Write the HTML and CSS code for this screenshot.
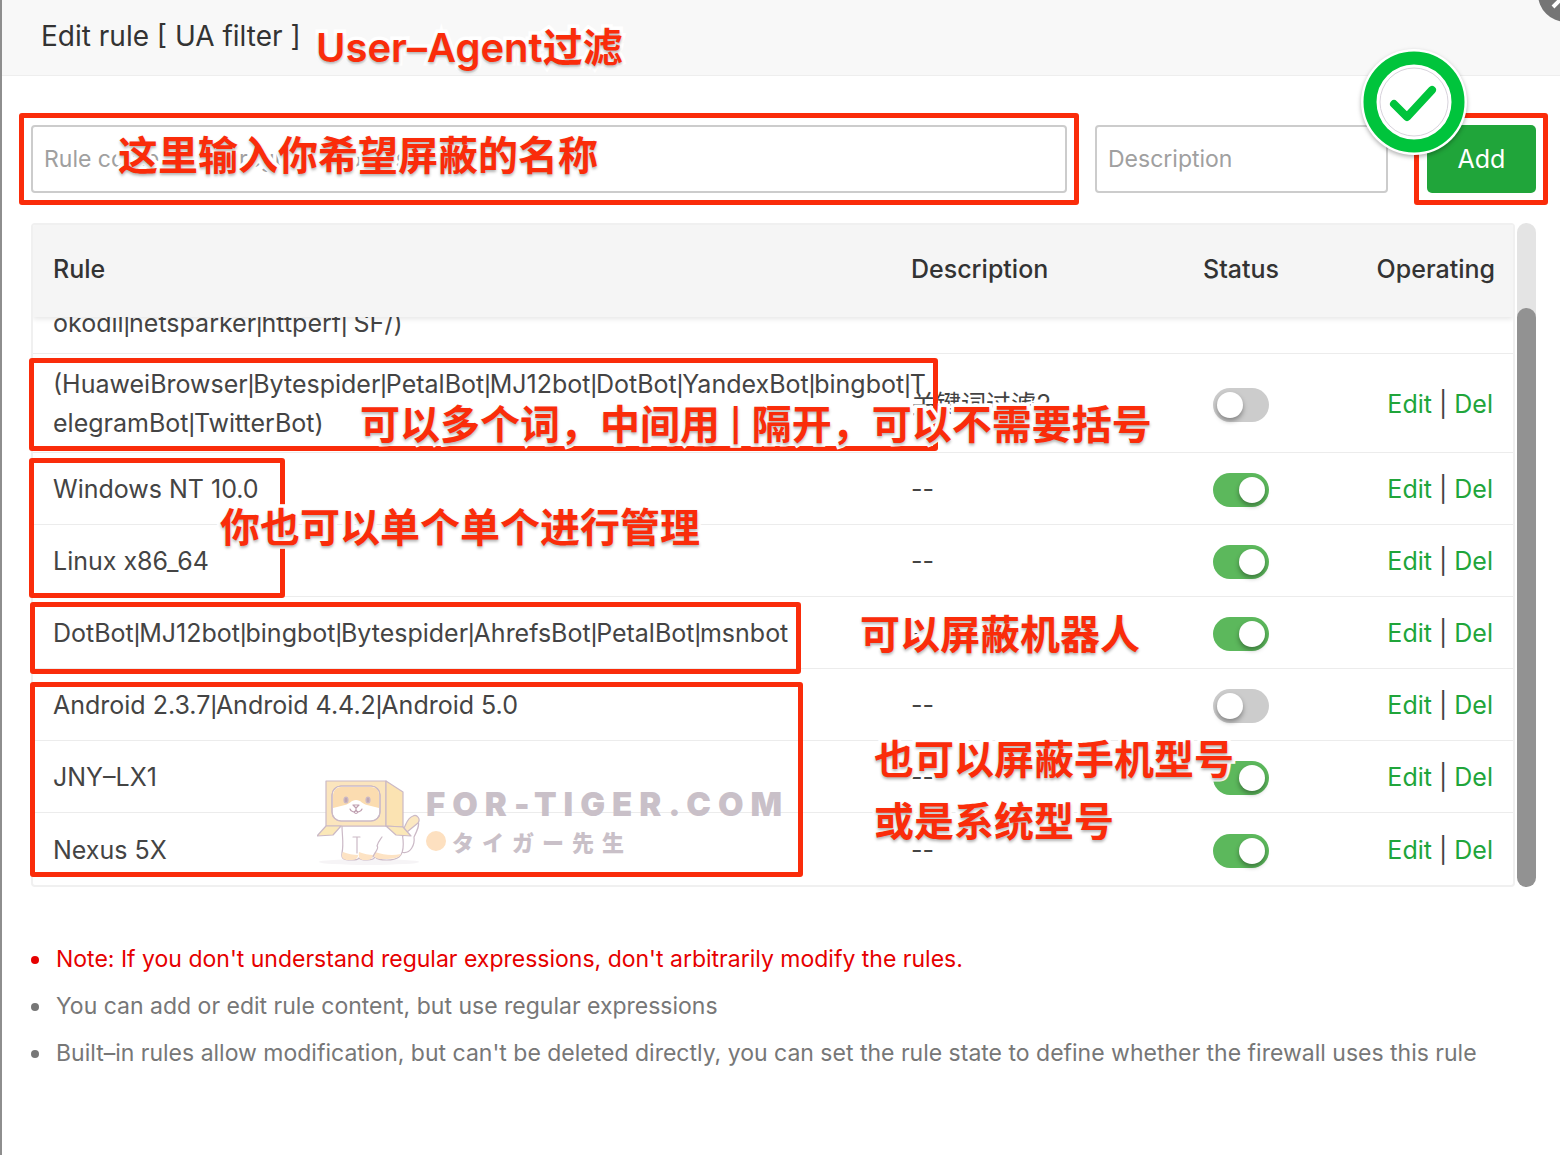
FILE: index.html
```
<!DOCTYPE html>
<html lang="en">
<head>
    <meta charset="UTF-8">
    <meta name="viewport" content="width=device-width, initial-scale=1.0">
    <title>Edit rule [ UA filter ]</title>
    <link rel="stylesheet" href="styles.css">
</head>
<body>
    <div class="dialog">
        <header class="dialog-title">
            <h1>Edit rule [ UA filter ]</h1>
            <button class="close-btn" aria-label="Close">
                <svg viewBox="0 0 56 56" width="56" height="56"><circle cx="28" cy="28" r="28" fill="#757575"/><path d="M15 15l26 26M41 15L15 41" stroke="#fff" stroke-width="4"/></svg>
            </button>
        </header>

        <main class="dialog-body">
            <form class="rule-form">
                <input class="field rule-input" type="text" aria-label="Rule content" placeholder="Rule content, use regular expressions">
                <input class="field desc-input" type="text" aria-label="Description" placeholder="Description">
                <button class="add-btn" type="button">Add</button>
            </form>

            <div class="table-area">
                <div class="table-scroll">
                    <table class="rule-table">
                        <thead>
                            <tr><th>Rule</th><th class="col-desc">Description</th><th class="col-status">Status</th><th class="col-op">Operating</th></tr>
                        </thead>
                        <tbody>
                            <tr class="row-long"><td>okodil<span class="or">|</span>netsparker<span class="or">|</span>httperf<span class="or">|</span> SF/)</td><td></td><td></td><td></td></tr>
                            <tr>
                                <td><div class="rule-text">(HuaweiBrowser<span class="or">|</span>Bytespider<span class="or">|</span>PetalBot<span class="or">|</span>MJ12bot<span class="or">|</span>DotBot<span class="or">|</span>YandexBot<span class="or">|</span>bingbot<span class="or">|</span>TelegramBot<span class="or">|</span>TwitterBot)</div></td>
                                <td>关键词过滤2</td>
                                <td class="status"><input class="switch" type="checkbox" aria-label="Huawei rule status"></td>
                                <td class="op"><a href="#">Edit</a> | <a href="#">Del</a></td>
                            </tr>
                            <tr>
                                <td>Windows NT 10.0</td>
                                <td>--</td>
                                <td class="status"><input class="switch" type="checkbox" aria-label="Windows NT 10.0 status" checked></td>
                                <td class="op"><a href="#">Edit</a> | <a href="#">Del</a></td>
                            </tr>
                            <tr>
                                <td>Linux x86_64</td>
                                <td>--</td>
                                <td class="status"><input class="switch" type="checkbox" aria-label="Linux x86_64 status" checked></td>
                                <td class="op"><a href="#">Edit</a> | <a href="#">Del</a></td>
                            </tr>
                            <tr>
                                <td>DotBot<span class="or">|</span>MJ12bot<span class="or">|</span>bingbot<span class="or">|</span>Bytespider<span class="or">|</span>AhrefsBot<span class="or">|</span>PetalBot<span class="or">|</span>msnbot</td>
                                <td>--</td>
                                <td class="status"><input class="switch" type="checkbox" aria-label="Bots status" checked></td>
                                <td class="op"><a href="#">Edit</a> | <a href="#">Del</a></td>
                            </tr>
                            <tr>
                                <td>Android 2.3.7<span class="or">|</span>Android 4.4.2<span class="or">|</span>Android 5.0</td>
                                <td>--</td>
                                <td class="status"><input class="switch" type="checkbox" aria-label="Android status"></td>
                                <td class="op"><a href="#">Edit</a> | <a href="#">Del</a></td>
                            </tr>
                            <tr>
                                <td>JNY–LX1</td>
                                <td>--</td>
                                <td class="status"><input class="switch" type="checkbox" aria-label="JNY-LX1 status" checked></td>
                                <td class="op"><a href="#">Edit</a> | <a href="#">Del</a></td>
                            </tr>
                            <tr>
                                <td>Nexus 5X</td>
                                <td>--</td>
                                <td class="status"><input class="switch" type="checkbox" aria-label="Nexus 5X status" checked></td>
                                <td class="op"><a href="#">Edit</a> | <a href="#">Del</a></td>
                            </tr>
                        </tbody>
                    </table>
                </div>
                <div class="scrollbar"><div class="scrollbar-thumb"></div></div>
            </div>

            <ul class="notes">
                <li class="warn">Note: If you don't understand regular expressions, don't arbitrarily modify the rules.</li>
                <li>You can add or edit rule content, but use regular expressions</li>
                <li>Built–in rules allow modification, but can't be deleted directly, you can set the rule state to define whether the firewall uses this rule</li>
            </ul>
        </main>

        <!-- watermark -->
        <div class="watermark">
            <svg class="tiger" viewBox="0 0 104 86" width="104" height="86" stroke="#cbb9c6" stroke-width="1.2" stroke-linejoin="round" stroke-linecap="round">
                <ellipse cx="52" cy="82" rx="50" ry="3" fill="#f6f4f6" stroke="none"/>
                <path d="M84 72c10 3 14-8 13-15 3-6 6-12 4-16-3-5-9-3-10 3l-5 12" fill="#fff"/>
                <path d="M90 52l11-9c3-4-1-9-5-7-6 2-7 9-9 12z" fill="#fbe8c2"/>
                <path d="M25 46c0 9 2 18 0 27-1 6 2 7 9 7 5 0 7 0 8-2 1 2 4 2 8 2 5 0 7-1 8-3 4 4 19 4 24 0 6-5 5-19 1-31z" fill="#fff"/>
                <path d="M26 72c-3 6 1 8 5 8 5 0 10 0 10-5-5 0-10-1-15-3zM42 72c-1 6 1 8 5 8s9 0 9-5c-4 0-9-1-14-3zM58 72c-3 6 2 7 7 7 7 0 17 0 19-5-9 2-17 1-26-2z" fill="#fde3c4" stroke="none"/>
                <path d="M36 57h7M40 57v16M65 57c-2 3-4 5-5 9 3 2-3 7-4 11" fill="none"/>
                <path d="M9 1h60v45H9z" fill="#fbe5bd"/>
                <path d="M69 1v45l17 1V12z" fill="#fbe3b2"/>
                <path d="M9 46L0 56l16-1 8-9zM69 46l10 9 15 1-8-9z" fill="#fbe8b8"/>
                <rect x="15" y="6" width="48" height="35" rx="9" fill="#fff"/>
                <path d="M16 28V15q1-8 8-8h30q8 0 8 8v13c-4-1-8-2-12-3-5-1-6-5-11-5s-6 4-11 5c-4 1-8 2-12 3z" fill="#fbdcb0" stroke="none"/>
                <rect x="15" y="6" width="48" height="35" rx="9" fill="none"/>
                <ellipse cx="29" cy="20" rx="2" ry="3" fill="#bfa7b4"/><ellipse cx="51" cy="20" rx="2" ry="3" fill="#bfa7b4"/>
                <path d="M36 25h6l-3 3zM39 28v2M39 30c-1 3-5 2-6-1M39 30c1 3 5 2 6-1M37 32q2 3 4 0" fill="none" stroke="#bf9fb0"/>
            </svg>
            <div class="watermark-text">
                <div class="watermark-domain">FOR-TIGER.COM</div>
                <div class="watermark-name"><span class="dot"></span>タイガー先生</div>
            </div>
        </div>

        <!-- red frames and callouts laid over the dialog -->
        <div class="frame frame-input"></div>
        <div class="frame frame-add"></div>
        <div class="frame frame-multi"></div>
        <div class="frame frame-single"></div>
        <div class="frame frame-bots"></div>
        <div class="frame frame-phones"></div>

        <p class="callout callout-title">User–Agent过滤</p>
        <p class="callout callout-input">这里输入你希望屏蔽的名称</p>
        <p class="callout callout-multi">可以多个词，中间用 <span class="callout-bar">|</span> 隔开，可以不需要括号</p>
        <p class="callout callout-single">你也可以单个单个进行管理</p>
        <p class="callout callout-bots">可以屏蔽机器人</p>
        <p class="callout callout-phones">也可以屏蔽手机型号<br>或是系统型号</p>

        <svg class="badge" viewBox="0 0 112 112" width="112" height="112">
            <circle cx="56" cy="56" r="53" fill="#fff"/>
            <circle cx="56" cy="56" r="44" fill="#fff" stroke="#00c43c" stroke-width="13"/>
            <circle cx="56" cy="56" r="34" fill="none" stroke="#d8d3dc" stroke-width="1"/>
            <path d="M36 58l13 13 25-27" fill="none" stroke="#00c43c" stroke-width="8" stroke-linecap="round" stroke-linejoin="round"/>
        </svg>
    </div>
</body>
</html>
```
FILE: styles.css
```
:root {
    --green: #20a53a;
    --switch-on: #5cb85c;
    --mark-red: #fa2c0a;
    --line: #ececec;
}

* {
    box-sizing: border-box;
}

body {
    margin: 0;
    background: #fff;
    color: #444;
    font-family: Inter, "Noto Sans CJK SC", sans-serif;
    font-size: 25px;
}

.dialog {
    position: relative;
    min-height: 100vh;
    border-left: 2px solid #8e8e8e;
    overflow: hidden;
}

.dialog-title {
    height: 76px;
    padding: 0 39px;
    background: #f8f8f8;
    border-bottom: 1px solid #eee;
}

.dialog-title h1 {
    margin: 0;
    font-size: 28px;
    font-weight: 400;
    line-height: 72px;
    color: #333;
}

.close-btn {
    position: absolute;
    top: -34px;
    right: -34px;
    padding: 0;
    border: 0;
    background: none;
}

.close-btn svg {
    display: block;
}

.dialog-body {
    padding: 49px 24px 40px 29px;
}

.rule-form {
    display: flex;
    margin-bottom: 30px;
}

.field {
    height: 68px;
    padding: 0 11px;
    border: 2px solid #ccc;
    border-radius: 4px;
    font: inherit;
    font-size: 23px;
    color: #444;
}

.field::placeholder {
    color: #a0a0a0;
}

.rule-input {
    flex: 1;
    min-width: 0;
    margin-right: 28px;
}

.desc-input {
    width: 293px;
    margin-right: 39px;
}

.add-btn {
    width: 109px;
    height: 68px;
    border: 0;
    border-radius: 5px;
    background: var(--green);
    color: #fff;
    font: inherit;
}

.table-area {
    display: flex;
    gap: 2px;
}

/* column-reverse keeps the list scrolled to its end */
.table-scroll {
    flex: 1;
    display: flex;
    flex-direction: column-reverse;
    max-height: 664px;
    overflow-x: hidden;
    overflow-y: auto;
    border: 2px solid #f0f0f0;
    border-radius: 4px;
    scrollbar-width: none;
}

.rule-table {
    width: 100%;
    table-layout: fixed;
    border-collapse: separate;
    border-spacing: 0;
}

.rule-table thead {
    position: sticky;
    top: 0;
    z-index: 1;
    box-shadow: 0 2px 5px rgba(0, 0, 0, 0.1);
}

.rule-table th {
    height: 92px;
    padding: 0 18px 4px 20px;
    background: #f5f5f5;
    color: #333;
    font-weight: 500;
    text-align: left;
}

.rule-table .col-desc {
    width: 281px;
}

.rule-table .col-status {
    width: 138px;
    padding: 0 0 4px;
    text-align: center;
}

.rule-table .col-op {
    width: 203px;
    text-align: right;
}

.rule-table td {
    height: 72px;
    padding: 11px 20px 9px;
    border-bottom: 1px solid var(--line);
    line-height: 39px;
    word-break: break-all;
}

.rule-table tr:last-child td {
    border-bottom: 0;
}

.rule-table .row-long td {
    padding: 10px 20px;
    vertical-align: bottom;
}

/* long rules run on into the next column's padding */
.rule-text {
    margin-right: -60px;
}

.or {
    margin-right: -1px;
    font-family: "Liberation Sans", sans-serif;
}

.rule-table .status {
    padding: 10px 0;
    text-align: center;
}

.rule-table .op {
    text-align: right;
}

.op a {
    color: var(--green);
    text-decoration: none;
}

.switch {
    appearance: none;
    display: inline-block;
    width: 56px;
    height: 34px;
    margin: 0;
    padding: 4px;
    border-radius: 17px;
    background: #ccc;
    vertical-align: middle;
}

.switch::before {
    content: "";
    display: block;
    width: 26px;
    height: 26px;
    border-radius: 50%;
    background: #fff;
    box-shadow: 0 3px 5px rgba(0, 0, 0, 0.35);
}

.switch:checked {
    background: var(--switch-on);
}

.switch:checked::before {
    margin-left: auto;
}

.scrollbar {
    width: 19px;
    padding-top: 85px;
    border-radius: 10px;
    background: #e4e4e4;
    display: flex;
}

.scrollbar-thumb {
    flex: 1;
    border-radius: 10px;
    background: #929292;
}

.notes {
    margin: 49px 0 0;
    padding: 0;
    list-style: none;
    font-size: 23px;
    line-height: 47px;
    color: #777;
}

.notes li {
    display: flex;
    align-items: center;
    gap: 17px;
}

.notes li::before {
    content: "";
    width: 8px;
    height: 8px;
    border-radius: 50%;
    background: currentColor;
}

.notes .warn {
    color: #e60000;
}

.watermark {
    position: absolute;
    left: 315px;
    top: 780px;
    display: flex;
    gap: 5px;
    color: #c9c0c8;
    font-weight: 900;
}

.watermark-domain {
    font-size: 33px;
    line-height: 48px;
    letter-spacing: 7px;
}

.watermark-name {
    display: flex;
    align-items: center;
    font-family: "Noto Sans CJK JP", sans-serif;
    font-size: 22px;
    line-height: 26px;
    letter-spacing: 8px;
}

.dot {
    width: 20px;
    height: 20px;
    margin-right: 6px;
    border-radius: 50%;
    background: #fde0c0;
}

.frame {
    position: absolute;
    border: 5px solid var(--mark-red);
    border-radius: 3px;
}

.frame-input {
    left: 17px;
    right: 481px;
    top: 113px;
    height: 92px;
}

.frame-add {
    right: 12px;
    width: 134px;
    top: 113px;
    height: 92px;
}

.frame-multi {
    left: 27px;
    width: 909px;
    top: 358px;
    height: 93px;
}

.frame-single {
    left: 27px;
    width: 256px;
    top: 458px;
    height: 140px;
}

.frame-bots {
    left: 28px;
    width: 771px;
    top: 602px;
    height: 72px;
}

.frame-phones {
    left: 28px;
    width: 773px;
    top: 682px;
    height: 195px;
}

.callout {
    position: absolute;
    margin: 0;
    color: var(--mark-red);
    font-size: 40px;
    font-weight: 600;
    line-height: 62px;
    white-space: nowrap;
    -webkit-text-stroke: 7px #fff;
    paint-order: stroke fill;
    text-shadow: 0 2px 3px rgba(0, 0, 0, 0.3);
}

.callout-bar {
    font-size: 32px;
    vertical-align: 2px;
}

.callout-title {
    left: 314px;
    top: 17px;
}

.callout-input {
    left: 116px;
    top: 125px;
}

.callout-multi {
    left: 358px;
    top: 394px;
}

.callout-single {
    left: 218px;
    top: 497px;
}

.callout-bots {
    left: 858px;
    top: 604px;
}

.callout-phones {
    left: 872px;
    top: 729px;
}

.badge {
    position: absolute;
    right: 90px;
    top: 46px;
    filter: drop-shadow(0 2px 2px rgba(0, 0, 0, 0.3));
}
```
